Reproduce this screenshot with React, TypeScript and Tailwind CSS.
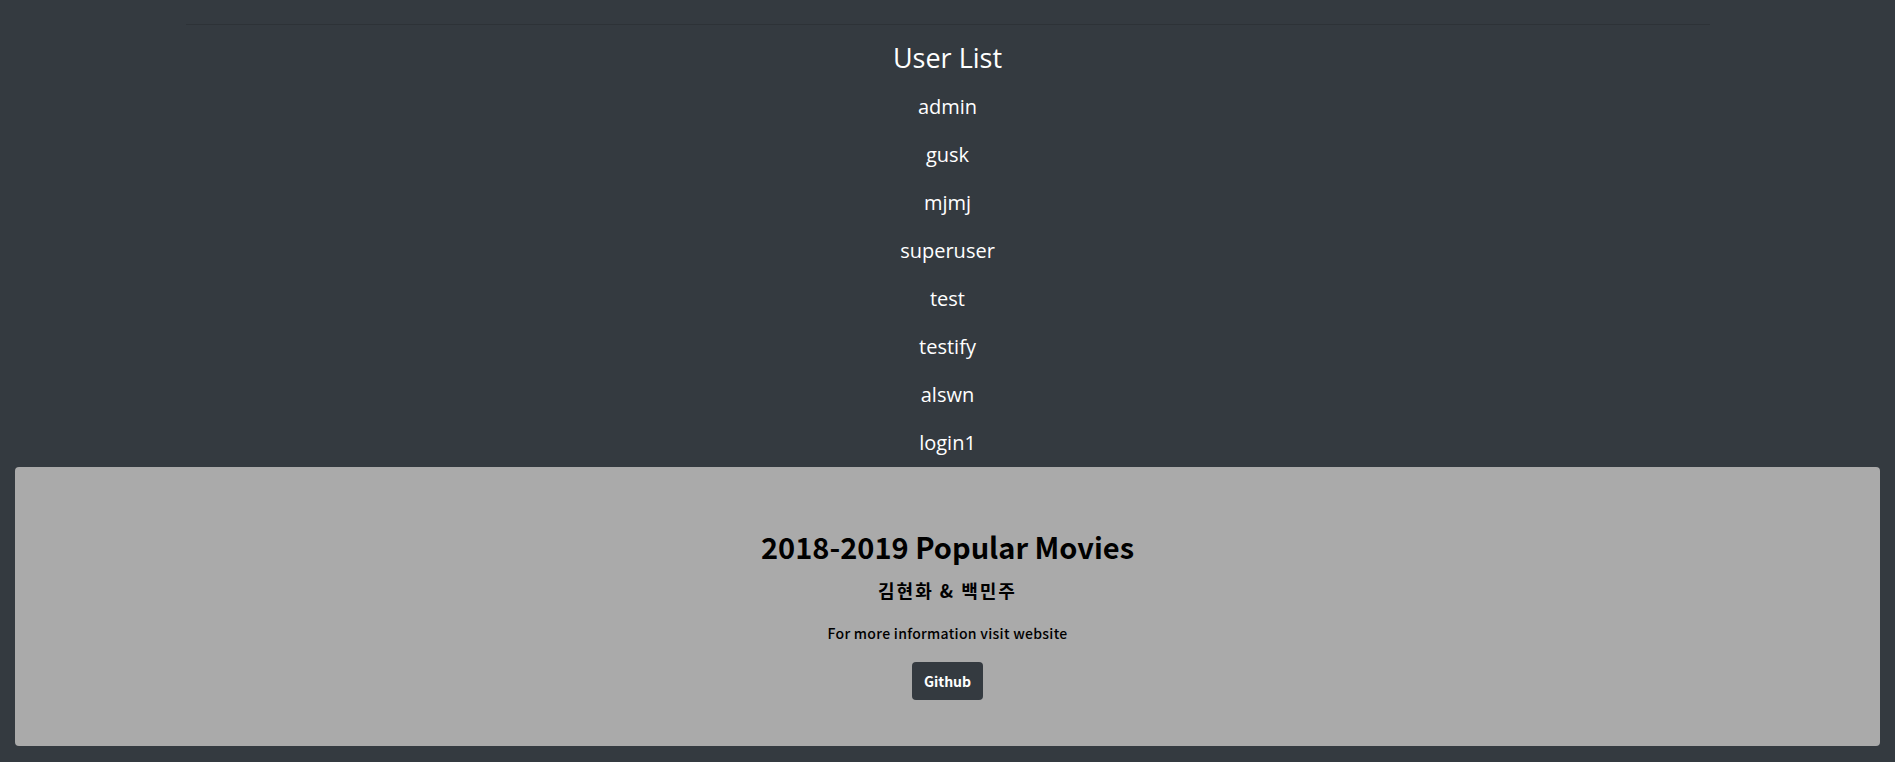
const users = ["admin", "gusk", "mjmj", "superuser", "test", "testify", "alswn", "login1"];

export default function App() {
  return (
    <div className="min-h-[762px] bg-[#343a40] pt-[24px] pb-[15px]">
      {/* top divider */}
      <div className="mx-auto w-[1524px] border-t border-[#2d3237]" />

      {/* user list */}
      <div className="flex flex-col items-center text-white" style={{ fontFamily: '"Open Sans", "Noto Sans CJK KR", sans-serif' }}>
        <h2 className="mt-[14px] text-[27px] leading-[38px]">User List</h2>
        <ul className="mt-[6px] flex flex-col items-center">
          {users.map((u) => (
            <li key={u} className="text-[20px] leading-[48px]">
              {u}
            </li>
          ))}
        </ul>
      </div>

      {/* footer card */}
      <div
        className="mx-[15px] flex h-[279px] flex-col items-center rounded-[4px] bg-[#aaaaaa] pt-[61px] text-black"
        style={{ fontFamily: '"Noto Sans CJK KR", "Noto Sans", sans-serif' }}
      >
        <h1 className="text-[29px] font-bold leading-[36px]">2018-2019 Popular Movies</h1>
        <h5 className="mt-[14px] text-[18px] font-bold leading-[24px] tracking-[2px]">김현화 &amp; 백민주</h5>
        <p className="mt-[21px] text-[14px] font-medium leading-[20px] tracking-[0.3px]">For more information visit website</p>
        <a
          href="#"
          className="mt-[19px] flex h-[38px] w-[71px] items-center justify-center rounded-[4px] bg-[#343a40] text-[14px] font-bold text-white"
        >
          Github
        </a>
      </div>
    </div>
  );
}
